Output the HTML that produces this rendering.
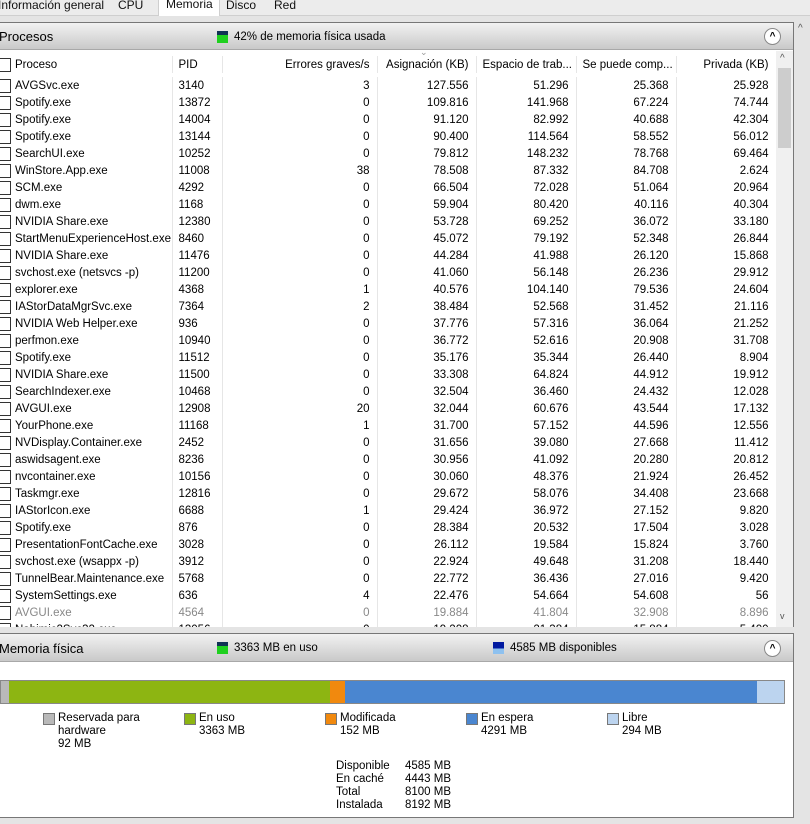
<!DOCTYPE html>
<html><head><meta charset="utf-8"><style>
*{margin:0;padding:0;box-sizing:border-box}
body{width:810px;height:824px;overflow:hidden;background:#e4e4e4;font-family:"Liberation Sans",sans-serif;font-size:11.5px;color:#000;position:relative}
.abs{position:absolute}
.tabs{left:0;top:0;width:810px;height:16px;background:#ececec;border-bottom:1px solid #cfcfcf}
.tab{position:absolute;top:-3px;font-size:12px;color:#111}
.hdr{background:linear-gradient(#f2f2f2,#c9c9c9);border-bottom:1px solid #a8a8a8}
.collapse{width:17px;height:17px;border-radius:50%;border:1px solid #888;background:#fff;text-align:center;font-size:10px;line-height:15px;font-weight:bold}
table{border-collapse:collapse;table-layout:fixed}
td{height:17px;padding:0 7px 0 0;text-align:right;white-space:nowrap;overflow:hidden;border-right:1px solid #e6e6e6}
td:first-child{text-align:left;padding-left:15px;position:relative}
td:nth-child(2){text-align:left;padding-left:6px}
td:first-child::before{content:"";position:absolute;left:-1px;top:2px;width:10px;height:12px;border:1px solid #333;background:#fff}
tr.g td{color:#888}
.lg{position:absolute;top:712px;font-size:11.5px;line-height:13px}
.lg i{position:absolute;left:-15px;top:1px;width:12px;height:12px;border:1px solid #777}
</style></head><body>
<div class="abs tabs">
<span class="tab" style="left:-2px;top:-2px">Información general</span>
<span class="tab" style="left:118px;top:-2px">CPU</span>
<div class="abs" style="left:158px;top:-2px;width:62px;height:18px;background:#fff;border:1px solid #cfcfcf;border-bottom:none"></div>
<span class="tab" style="left:166px;top:-3px">Memoria</span>
<span class="tab" style="left:226px;top:-2px">Disco</span>
<span class="tab" style="left:274px;top:-2px">Red</span>
</div>
<div class="abs" style="left:0;top:22px;width:794px;height:606px;background:#fff;border:1px solid #777;border-left:none"></div>
<div class="abs hdr" style="left:0;top:23px;width:793px;height:27px"></div>
<div class="abs" style="left:-1px;top:29px;font-size:13px">Procesos</div>
<div class="abs" style="left:217px;top:31px;width:11px;height:12px;background:#1fd01f;border-top:4px solid #135;"></div>
<div class="abs" style="left:234px;top:31px">42% de memoria física usada</div>
<div class="abs collapse" style="left:764px;top:28px">^</div>
<div class="abs" style="left:0;top:51px;width:776px;height:24px;background:#fff"></div>
<table class="abs" style="left:0;top:56px;width:776px">
<colgroup><col style="width:172px"><col style="width:50px"><col style="width:155px"><col style="width:99px"><col style="width:100px"><col style="width:100px"><col style="width:100px"></colgroup>
<tr><td>Proceso</td><td>PID</td><td>Errores graves/s</td><td>Asignación (KB)</td><td style="text-align:left;padding-left:6px">Espacio de trab...</td><td style="text-align:left;padding-left:6px">Se puede comp...</td><td>Privada (KB)</td></tr>
</table>
<div class="abs" style="left:420px;top:47px;font-size:9px;color:#999">&#8964;</div>
<table class="abs" style="left:0;top:77px;width:776px">
<colgroup><col style="width:172px"><col style="width:50px"><col style="width:155px"><col style="width:99px"><col style="width:100px"><col style="width:100px"><col style="width:100px"></colgroup>
<tr><td>AVGSvc.exe</td><td>3140</td><td>3</td><td>127.556</td><td>51.296</td><td>25.368</td><td>25.928</td></tr>
<tr><td>Spotify.exe</td><td>13872</td><td>0</td><td>109.816</td><td>141.968</td><td>67.224</td><td>74.744</td></tr>
<tr><td>Spotify.exe</td><td>14004</td><td>0</td><td>91.120</td><td>82.992</td><td>40.688</td><td>42.304</td></tr>
<tr><td>Spotify.exe</td><td>13144</td><td>0</td><td>90.400</td><td>114.564</td><td>58.552</td><td>56.012</td></tr>
<tr><td>SearchUI.exe</td><td>10252</td><td>0</td><td>79.812</td><td>148.232</td><td>78.768</td><td>69.464</td></tr>
<tr><td>WinStore.App.exe</td><td>11008</td><td>38</td><td>78.508</td><td>87.332</td><td>84.708</td><td>2.624</td></tr>
<tr><td>SCM.exe</td><td>4292</td><td>0</td><td>66.504</td><td>72.028</td><td>51.064</td><td>20.964</td></tr>
<tr><td>dwm.exe</td><td>1168</td><td>0</td><td>59.904</td><td>80.420</td><td>40.116</td><td>40.304</td></tr>
<tr><td>NVIDIA Share.exe</td><td>12380</td><td>0</td><td>53.728</td><td>69.252</td><td>36.072</td><td>33.180</td></tr>
<tr><td>StartMenuExperienceHost.exe</td><td>8460</td><td>0</td><td>45.072</td><td>79.192</td><td>52.348</td><td>26.844</td></tr>
<tr><td>NVIDIA Share.exe</td><td>11476</td><td>0</td><td>44.284</td><td>41.988</td><td>26.120</td><td>15.868</td></tr>
<tr><td>svchost.exe (netsvcs -p)</td><td>11200</td><td>0</td><td>41.060</td><td>56.148</td><td>26.236</td><td>29.912</td></tr>
<tr><td>explorer.exe</td><td>4368</td><td>1</td><td>40.576</td><td>104.140</td><td>79.536</td><td>24.604</td></tr>
<tr><td>IAStorDataMgrSvc.exe</td><td>7364</td><td>2</td><td>38.484</td><td>52.568</td><td>31.452</td><td>21.116</td></tr>
<tr><td>NVIDIA Web Helper.exe</td><td>936</td><td>0</td><td>37.776</td><td>57.316</td><td>36.064</td><td>21.252</td></tr>
<tr><td>perfmon.exe</td><td>10940</td><td>0</td><td>36.772</td><td>52.616</td><td>20.908</td><td>31.708</td></tr>
<tr><td>Spotify.exe</td><td>11512</td><td>0</td><td>35.176</td><td>35.344</td><td>26.440</td><td>8.904</td></tr>
<tr><td>NVIDIA Share.exe</td><td>11500</td><td>0</td><td>33.308</td><td>64.824</td><td>44.912</td><td>19.912</td></tr>
<tr><td>SearchIndexer.exe</td><td>10468</td><td>0</td><td>32.504</td><td>36.460</td><td>24.432</td><td>12.028</td></tr>
<tr><td>AVGUI.exe</td><td>12908</td><td>20</td><td>32.044</td><td>60.676</td><td>43.544</td><td>17.132</td></tr>
<tr><td>YourPhone.exe</td><td>11168</td><td>1</td><td>31.700</td><td>57.152</td><td>44.596</td><td>12.556</td></tr>
<tr><td>NVDisplay.Container.exe</td><td>2452</td><td>0</td><td>31.656</td><td>39.080</td><td>27.668</td><td>11.412</td></tr>
<tr><td>aswidsagent.exe</td><td>8236</td><td>0</td><td>30.956</td><td>41.092</td><td>20.280</td><td>20.812</td></tr>
<tr><td>nvcontainer.exe</td><td>10156</td><td>0</td><td>30.060</td><td>48.376</td><td>21.924</td><td>26.452</td></tr>
<tr><td>Taskmgr.exe</td><td>12816</td><td>0</td><td>29.672</td><td>58.076</td><td>34.408</td><td>23.668</td></tr>
<tr><td>IAStorIcon.exe</td><td>6688</td><td>1</td><td>29.424</td><td>36.972</td><td>27.152</td><td>9.820</td></tr>
<tr><td>Spotify.exe</td><td>876</td><td>0</td><td>28.384</td><td>20.532</td><td>17.504</td><td>3.028</td></tr>
<tr><td>PresentationFontCache.exe</td><td>3028</td><td>0</td><td>26.112</td><td>19.584</td><td>15.824</td><td>3.760</td></tr>
<tr><td>svchost.exe (wsappx -p)</td><td>3912</td><td>0</td><td>22.924</td><td>49.648</td><td>31.208</td><td>18.440</td></tr>
<tr><td>TunnelBear.Maintenance.exe</td><td>5768</td><td>0</td><td>22.772</td><td>36.436</td><td>27.016</td><td>9.420</td></tr>
<tr><td>SystemSettings.exe</td><td>636</td><td>4</td><td>22.476</td><td>54.664</td><td>54.608</td><td>56</td></tr>
<tr class="g"><td>AVGUI.exe</td><td>4564</td><td>0</td><td>19.884</td><td>41.804</td><td>32.908</td><td>8.896</td></tr>
<tr><td>Nahimic2Svc32.exe</td><td>13056</td><td>0</td><td>19.208</td><td>21.384</td><td>15.884</td><td>5.400</td></tr>
</table>
<div class="abs" style="left:0;top:627px;width:810px;height:6px;background:#e4e4e4"></div>
<div class="abs" style="left:776px;top:51px;width:17px;height:576px;background:#f0f0f0"></div>
<div class="abs" style="left:778px;top:68px;width:13px;height:80px;background:#cdcdcd"></div>
<div class="abs" style="left:780px;top:53px;font-size:10px;color:#555">^</div>
<div class="abs" style="left:780px;top:611px;font-size:9px;color:#555">v</div>
<div class="abs" style="left:798px;top:23px;font-size:10px;color:#555">^</div>
<div class="abs" style="left:0;top:633px;width:794px;height:185px;background:#fff;border:1px solid #777;border-left:none"></div>
<div class="abs hdr" style="left:0;top:634px;width:793px;height:28px"></div>
<div class="abs" style="left:-1px;top:641px;font-size:13px">Memoria física</div>
<div class="abs" style="left:217px;top:642px;width:11px;height:12px;background:#1fd01f;border-top:4px solid #135"></div>
<div class="abs" style="left:234px;top:642px">3363 MB en uso</div>
<div class="abs" style="left:493px;top:642px;width:11px;height:12px;background:linear-gradient(#0019a0 55%,#8ec1ef 55%)"></div>
<div class="abs" style="left:510px;top:642px">4585 MB disponibles</div>
<div class="abs collapse" style="left:764px;top:640px">^</div>
<div class="abs" style="left:0;top:680px;width:785px;height:24px;border:1px solid #888;display:flex">
<div style="width:8px;background:#b9b9b9"></div><div style="width:321px;background:#8db512"></div><div style="width:15px;background:#f1890e"></div><div style="width:412px;background:#4a86d0"></div><div style="flex:1;background:#bcd4ef"></div></div>
<div class="lg" style="left:58px"><i style="background:#b9b9b9"></i>Reservada para<br>hardware<br>92 MB</div>
<div class="lg" style="left:199px"><i style="background:#8db512"></i>En uso<br>3363 MB</div>
<div class="lg" style="left:340px"><i style="background:#f1890e"></i>Modificada<br>152 MB</div>
<div class="lg" style="left:481px"><i style="background:#4a86d0"></i>En espera<br>4291 MB</div>
<div class="lg" style="left:622px"><i style="background:#bcd4ef"></i>Libre<br>294 MB</div>
<div class="abs" style="left:336px;top:760px;line-height:13px">Disponible<br>En caché<br>Total<br>Instalada</div>
<div class="abs" style="left:405px;top:760px;line-height:13px">4585 MB<br>4443 MB<br>8100 MB<br>8192 MB</div>
</body></html>
